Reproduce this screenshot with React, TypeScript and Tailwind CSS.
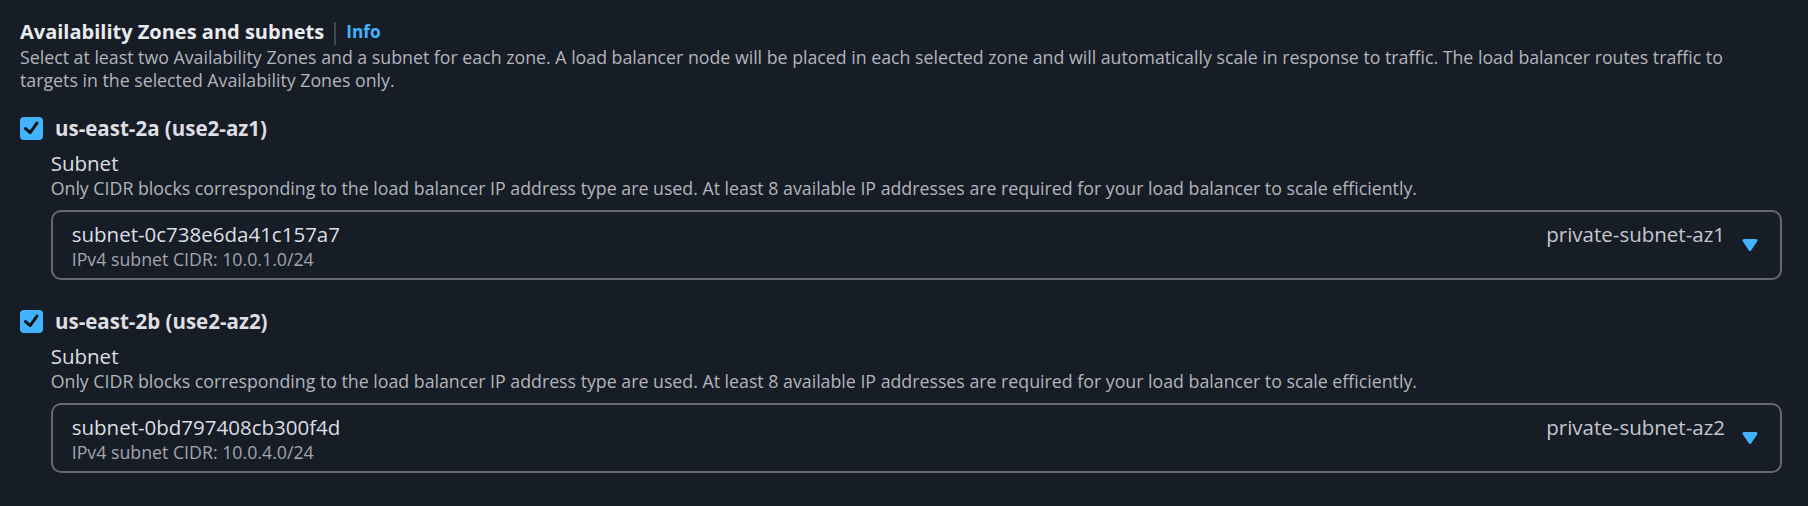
type Zone = {
  name: string;
  subnetId: string;
  cidr: string;
  subnetName: string;
};

const zones: Zone[] = [
  {
    name: 'us-east-2a (use2-az1)',
    subnetId: 'subnet-0c738e6da41c157a7',
    cidr: '10.0.1.0/24',
    subnetName: 'private-subnet-az1',
  },
  {
    name: 'us-east-2b (use2-az2)',
    subnetId: 'subnet-0bd797408cb300f4d',
    cidr: '10.0.4.0/24',
    subnetName: 'private-subnet-az2',
  },
];

function Checkbox() {
  return (
    <span className="flex h-[23px] w-[23px] shrink-0 items-center justify-center rounded-[4px] bg-[#42b4ff]">
      <svg viewBox="0 0 14 14" className="h-[19px] w-[19px]" fill="none">
        <polyline
          points="2.5,7 6,10 11,3"
          stroke="#0f141a"
          strokeWidth="2.2"
          strokeLinecap="round"
          strokeLinejoin="round"
        />
      </svg>
    </span>
  );
}

function CaretDown() {
  return (
    <svg viewBox="0 0 16 16" className="h-6 w-6 shrink-0">
      <path
        d="M4 5h8l-4 6-4-6z"
        fill="#42b4ff"
        stroke="#42b4ff"
        strokeWidth="2"
        strokeLinejoin="round"
      />
    </svg>
  );
}

function ZoneField({ zone, first }: { zone: Zone; first: boolean }) {
  return (
    <div className={first ? 'mt-[21px]' : 'mt-[26px]'}>
      {/* Zone checkbox */}
      <label className="flex h-[30px] items-center gap-3">
        <Checkbox />
        <span className="text-[20.5px] font-bold leading-[30px] text-[#dedee3]">{zone.name}</span>
      </label>

      {/* Subnet select */}
      <div className="pl-[30.7px]">
        <div className="mt-[6px] text-[20.5px] leading-[28px] text-[#dedee3]">Subnet</div>
        <div className="text-[17.75px] leading-[23px] text-[#b4b4bb]">
          Only CIDR blocks corresponding to the load balancer IP address type are used. At least 8 available IP
          addresses are required for your load balancer to scale efficiently.
        </div>
        <button
          type="button"
          className="mt-[10px] flex h-[70px] w-full items-center rounded-[10px] border-2 border-[#656871] pl-[19px] pr-[18px] text-left"
        >
          <div className="flex flex-1 items-start justify-between">
            <div className="flex flex-col">
              <span className="text-[20.5px] leading-[26px] text-[#dedee3]">{zone.subnetId}</span>
              <span className="mt-px text-[17.75px] leading-[22px] text-[#a4a4ad]">
                IPv4 subnet CIDR: {zone.cidr}
              </span>
            </div>
            <span className="text-[20.5px] leading-[26px] text-[#c6c6cd]">{zone.subnetName}</span>
          </div>
          <span className="ml-[13px]">
            <CaretDown />
          </span>
        </button>
      </div>
    </div>
  );
}

export default function App() {
  return (
    <div
      className="min-h-screen bg-[#161d26] pl-5 pr-[26px] pt-[17px]"
      style={{ fontFamily: '"Open Sans", "Noto Sans", sans-serif' }}
    >
      {/* Header */}
      <div className="flex items-center">
        <h2 className="text-[20px] font-bold leading-[29px] text-[#e9ebed]">Availability Zones and subnets</h2>
        <span className="ml-[10px] mt-[3px] h-[23px] w-[2px] bg-[#414750]" />
        <a className="ml-[10px] text-[17.25px] font-bold leading-[29px] text-[#42b4ff]">Info</a>
      </div>
      <p className="text-[17.75px] leading-[23px] text-[#b4b4bb]">
        Select at least two Availability Zones and a subnet for each zone. A load balancer node will be placed in each
        selected zone and will automatically scale in response to traffic. The load balancer routes traffic to targets
        in the selected Availability Zones only.
      </p>

      {zones.map((zone, i) => (
        <ZoneField key={zone.subnetId} zone={zone} first={i === 0} />
      ))}
    </div>
  );
}
